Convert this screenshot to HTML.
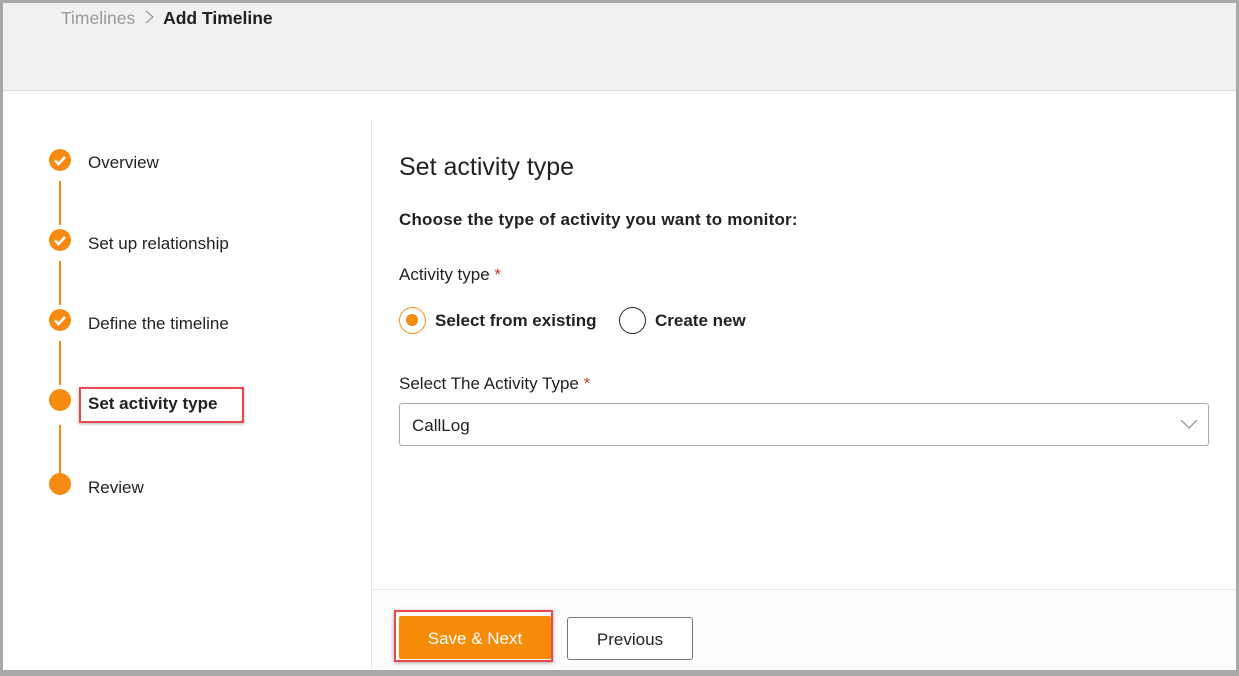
<!DOCTYPE html>
<html><head><style>
*{margin:0;padding:0;box-sizing:border-box}
body{width:1239px;height:676px;overflow:hidden;background:#a8a8a8;font-family:"Liberation Sans",sans-serif;color:#222;position:relative}
.frame{position:absolute;left:3px;top:3px;width:1233px;height:667px;background:#fff;overflow:hidden}
.hdr{position:absolute;left:0;top:0;width:100%;height:88px;background:#f1f1f1;border-bottom:1px solid #dcdcdc}
.bc{position:absolute;left:58px;top:5px;font-size:17.5px;color:#999}
.bc b{color:#222;font-weight:bold}
.side{position:absolute;left:368px;top:117px;width:1px;height:550px;background:#e6e6e6}
.step{position:absolute;left:85px;font-size:17px;color:#222}
.dot{position:absolute;left:46px;width:22px;height:22px;border-radius:50%;background:#f68b12}
.line{position:absolute;left:56px;width:2px;background:#f68b12}
.main{position:absolute;left:396px}
.foot{position:absolute;left:369px;top:586px;right:0;bottom:0;border-top:1px solid #e6e6e6;background:#fdfdfd}
.req{color:#c0392b}
</style></head><body>
<div class="frame">
<div class="hdr"><div class="bc">Timelines <svg width="14" height="16" style="margin:0 6px 0 3px;vertical-align:-1px"><path d="M3 2l7 6-7 6" stroke="#999" stroke-width="1.2" fill="none"/></svg><b>Add Timeline</b></div></div>
<div class="side"></div>
<div class="line" style="top:178px;height:44px"></div>
<div class="line" style="top:258px;height:44px"></div>
<div class="line" style="top:338px;height:44px"></div>
<div class="line" style="top:422px;height:50px"></div>
<div class="dot" style="top:146px"><svg width="22" height="22"><path d="M6 11.5l3.5 3.5 6.5-7" stroke="#fff" stroke-width="2.6" fill="none"/></svg></div>
<div class="dot" style="top:226px"><svg width="22" height="22"><path d="M6 11.5l3.5 3.5 6.5-7" stroke="#fff" stroke-width="2.6" fill="none"/></svg></div>
<div class="dot" style="top:306px"><svg width="22" height="22"><path d="M6 11.5l3.5 3.5 6.5-7" stroke="#fff" stroke-width="2.6" fill="none"/></svg></div>
<div class="dot" style="top:386px"></div>
<div class="dot" style="top:470px"></div>
<div class="step" style="top:150px">Overview</div>
<div class="step" style="top:231px">Set up relationship</div>
<div class="step" style="top:311px">Define the timeline</div>
<div style="position:absolute;left:76px;top:384px;width:165px;height:36px;border:2px solid #e84a4f;box-shadow:0 1px 3px rgba(0,0,0,.3)"></div>
<div class="step" style="top:391px;font-weight:bold">Set activity type</div>
<div class="step" style="top:475px">Review</div>

<div class="main" style="top:150px;font-size:25px;color:#222">Set activity type</div>
<div class="main" style="top:207px;font-size:17px;font-weight:bold;letter-spacing:.2px">Choose the type of activity you want to monitor:</div>
<div class="main" style="top:262px;font-size:17px">Activity type <span class="req">*</span></div>
<div class="main" style="top:304px;width:27px;height:27px;border:1.5px solid #f68b12;border-radius:50%"><div style="margin:6px;width:12px;height:12px;border-radius:50%;background:#f68b12"></div></div>
<div class="main" style="left:432px;top:308px;font-size:17px;font-weight:bold">Select from existing</div>
<div class="main" style="left:616px;top:304px;width:27px;height:27px;border:1.5px solid #222;border-radius:50%"></div>
<div class="main" style="left:652px;top:308px;font-size:17px;font-weight:bold">Create new</div>
<div class="main" style="top:371px;font-size:17px">Select The Activity Type <span class="req">*</span></div>
<div class="main" style="top:400px;width:810px;height:43px;border:1px solid #aaa;border-radius:3px;font-size:17px;padding:12px 12px">CallLog
<svg style="position:absolute;right:10px;top:14px" width="18" height="12"><path d="M1 2l8 8 8-8" stroke="#999" stroke-width="1.3" fill="none"/></svg></div>
<div class="foot"></div>
<div style="position:absolute;left:391px;top:607px;width:159px;height:52px;border:2px solid #e84a4f;box-shadow:0 1px 4px rgba(0,0,0,.35)"></div>
<div style="position:absolute;left:396px;top:613px;width:152px;height:43px;background:#f68b08;border-radius:2px;color:#fff;font-size:17px;text-align:center;line-height:45px">Save &amp; Next</div>
<div style="position:absolute;left:564px;top:614px;width:126px;height:43px;border:1px solid #777;border-radius:3px;font-size:17px;text-align:center;line-height:43px;background:#fff">Previous</div>
</div>
</body></html>
